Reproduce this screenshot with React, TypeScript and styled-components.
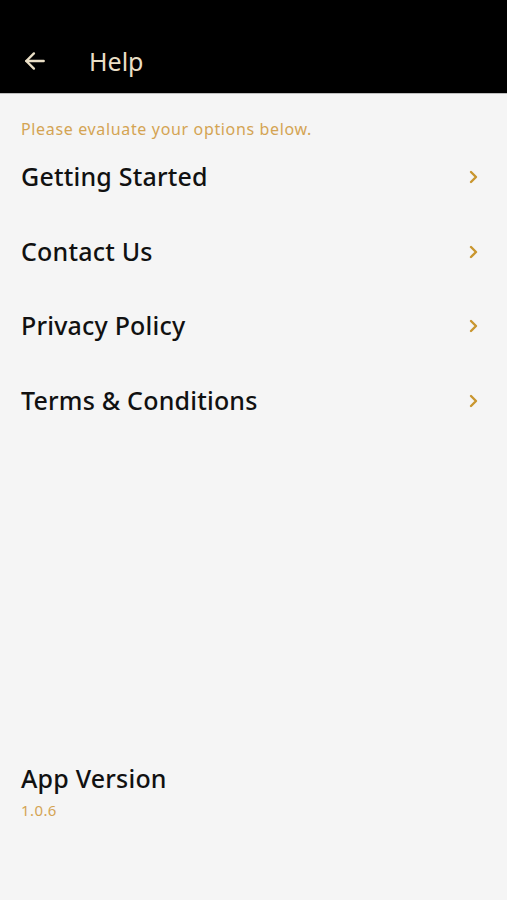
import React from "react";
import styled, { createGlobalStyle } from "styled-components";

const Global = createGlobalStyle`
  html, body { margin: 0; padding: 0; background: #f5f5f5; }
  body { font-family: "Noto Sans", "Lato", sans-serif; }
`;

const Page = styled.div`
  width: 507px;
  height: 900px;
  display: flex;
  flex-direction: column;
  background: #f5f5f5;
`;

const Header = styled.header`
  height: 94px;
  background: #000;
  border-bottom: 1px solid #bdbdbd;
  display: flex;
  align-items: center;
  padding: 28px 0 0 22px;
  box-sizing: border-box;
`;

const BackButton = styled.button`
  background: none;
  border: none;
  padding: 0;
  width: 26px;
  height: 26px;
  display: flex;
  align-items: center;
  justify-content: center;
  color: #eadfc6;
`;

const Title = styled.h1`
  margin: 0 0 0 41px;
  font-size: 25px;
  font-weight: 400;
  color: #eadfc6;
`;

const Body = styled.main`
  flex: 1;
  display: flex;
  flex-direction: column;
  padding: 24px 21px 0 21px;
`;

const Subtitle = styled.p`
  margin: 0;
  font-size: 16px;
  color: #d4a453;
  line-height: 22px;
  letter-spacing: 0.65px;
`;

const List = styled.ul`
  list-style: none;
  margin: 0;
  padding: 0;
`;

const Item = styled.li`
  height: 74.6px;
  display: flex;
  align-items: center;
  justify-content: space-between;
  &:first-child { margin-top: -1px; }
`;

const ItemLabel = styled.span`
  font-size: 25px;
  font-weight: 500;
  color: #111;
  letter-spacing: 0.2px;
`;

const Chevron = styled.span`
  display: flex;
  color: #c9962f;
  margin-right: 6px;
  margin-top: 2px;
`;

const Footer = styled.footer`
  margin-top: auto;
  padding: 0 21px 80px;
`;

const FooterTitle = styled.div`
  font-size: 25px;
  font-weight: 500;
  color: #111;
  line-height: 32px;
  letter-spacing: 0.2px;
`;

const Version = styled.div`
  font-size: 15px;
  color: #d4a453;
  margin-top: 6px;
  letter-spacing: 0.4px;
`;

const items = ["Getting Started", "Contact Us", "Privacy Policy", "Terms & Conditions"];

export default function App() {
  return (
    <Page>
      <Global />
      <Header>
        <BackButton aria-label="Back">
          <svg width="26" height="26" viewBox="0 0 24 24" fill="none" stroke="currentColor" strokeWidth="2.2" strokeLinecap="round" strokeLinejoin="round">
            <path d="M20 12H4" />
            <path d="M11 5l-7 7 7 7" />
          </svg>
        </BackButton>
        <Title>Help</Title>
      </Header>
      <Body>
        <Subtitle>Please evaluate your options below.</Subtitle>
        <List>
          {items.map((t) => (
            <Item key={t}>
              <ItemLabel>{t}</ItemLabel>
              <Chevron>
                <svg width="12" height="16" viewBox="0 0 12 16" fill="none" stroke="currentColor" strokeWidth="2.4" strokeLinecap="round" strokeLinejoin="round">
                  <path d="M3 3l5 5-5 5" />
                </svg>
              </Chevron>
            </Item>
          ))}
        </List>
      </Body>
      <Footer>
        <FooterTitle>App Version</FooterTitle>
        <Version>1.0.6</Version>
      </Footer>
    </Page>
  );
}
